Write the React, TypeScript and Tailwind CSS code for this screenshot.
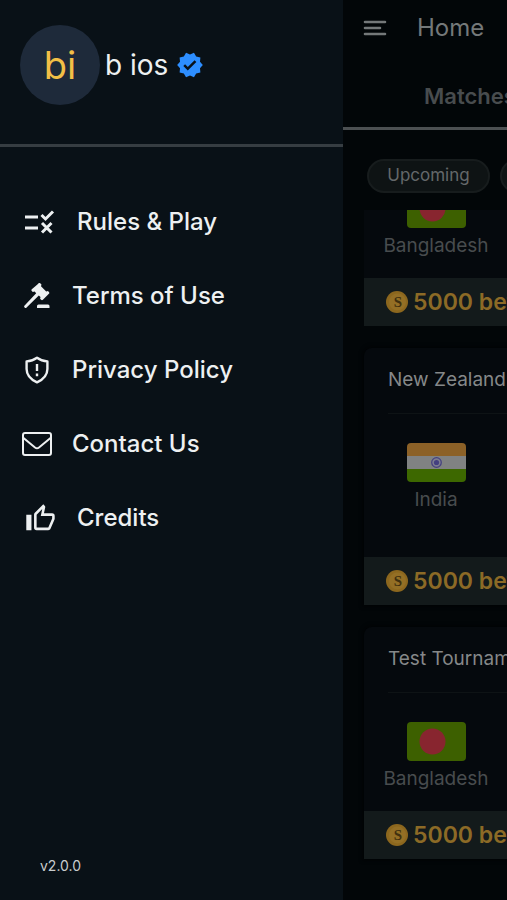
import React from "react";
import { MdVerified } from "react-icons/md";

function Rule() {
  return (
    <svg viewBox="0 0 30 24" className="h-6 w-[30px]" fill="none" stroke="currentColor" strokeWidth="3" aria-hidden="true">
      <path d="M0 7h13M0 18h13" />
      <path d="m16.500 5 4 4L28 1.500M17 13l9.500 9.500M26.500 13 17 22.500" />
    </svg>
  );
}

function Gavel() {
  return (
    <svg viewBox="0 0 26 26" className="size-[26px]" fill="currentColor" aria-hidden="true">
      <path d="M13.400 1.400 14.600.3a1.200 1.200 0 0 1 1.600 0l1.300 1.200-.5 1.700 5.200 5.200 1.700-.4 1 1a1.300 1.300 0 0 1 0 1.800l-6 6a1.300 1.300 0 0 1-1.800 0l-1-1 .4-1.700-1.700-1.700L2.600 24.600a1.400 1.400 0 0 1-2-2L12.200 10.200l-1.600-1.600-1.800.4-1-1a1.300 1.300 0 0 1 0-1.800z" />
      <path d="M14.500 21.500H24a1.500 1.500 0 0 1 1.500 1.500v2H13v-2a1.500 1.500 0 0 1 1.500-1.500z" />
    </svg>
  );
}

function Shield() {
  return (
    <svg viewBox="0 0 26 28" className="h-7 w-[26px]" fill="none" stroke="currentColor" strokeWidth="2.400" strokeLinejoin="round" aria-hidden="true">
      <path d="M13 1.800 C10 4 6 5.200 2.600 5.400V13c0 6.500 4.400 10.600 10.400 13.400C19 23.600 23.400 19.500 23.400 13V5.400C20 5.200 16 4 13 1.800z" />
      <path d="M13 8v7M13 17.500v2.700" />
    </svg>
  );
}

function Envelope() {
  return (
    <svg viewBox="0 0 30 24" className="h-6 w-[30px]" fill="none" stroke="currentColor" strokeWidth="2" aria-hidden="true">
      <rect x="1" y="1" width="28" height="22" rx="2" />
      <path d="m1.500 6 11.500 9.500q2 1.500 4 0L28.500 6" />
    </svg>
  );
}

function ThumbUp() {
  return (
    <svg viewBox="0 0 24 24" className="size-[31px]" fill="currentColor" aria-hidden="true">
      <path d="M5 9v12H1V9h4m4 12a2 2 0 0 1-2-2V9c0-.55.22-1.05.59-1.41L14.170 1l1.060 1.060c.27.27.44.64.44 1.050l-.03.32L14.690 8H21a2 2 0 0 1 2 2v2c0 .26-.05.5-.14.73l-3.020 7.050C19.540 20.500 18.830 21 18 21H9m0-2h9.030L21 12v-2h-8.790l1.130-5.320L9 9.030V19z" />
    </svg>
  );
}

function Item({ icon, wide, children }: { icon: React.ReactNode; wide?: boolean; children: React.ReactNode }) {
  return (
    <li className="h-[74px]">
      <a href="#" className="flex h-full items-center">
        <span className={wide ? "flex w-[55px] pl-[3px]" : "flex w-[50px] pr-5 justify-center"}>{icon}</span>
        <span>{children}</span>
      </a>
    </li>
  );
}

function Flag({ country }: { country: string }) {
  return (
    <svg viewBox="0 0 59 39" className="h-[39px] w-[59px] rounded" role="img" aria-label={country}>
      {country === "India" ? (
        <>
          <path fill="#8c6127" d="M0 0h59v13H0z" />
          <path fill="#808282" d="M0 13h59v13H0z" />
          <path fill="#3d6800" d="M0 26h59v13H0z" />
          <circle cx="29.500" cy="19.500" r="4.800" fill="#7c7c90" stroke="#444080" strokeWidth="1.200" />
          <circle cx="29.500" cy="19.500" r="2.600" fill="#444080" />
        </>
      ) : (
        <>
          <path fill="#3d6000" d="M0 0h59v39H0z" />
          <circle cx="25.500" cy="19.500" r="13" fill="#88252f" />
        </>
      )}
    </svg>
  );
}

function Bet() {
  return (
    <div className="flex h-12 items-center gap-[5px] bg-[#131a1b] pl-[22px] text-[23px] font-semibold text-[#8c6a26]">
      <svg viewBox="0 0 22 22" className="size-[22px] shrink-0" aria-hidden="true">
        <circle cx="11" cy="11" r="11" fill="#8c671e" />
        <circle cx="11.500" cy="11" r="8.500" fill="#946f25" />
        <text x="12" y="16" textAnchor="middle" fontSize="15" fontWeight="700" fill="#40300f" className="font-['Liberation_Serif',serif]">S</text>
      </svg>
      <span>5000 bet</span>
    </div>
  );
}

function Match({ title, country, short }: { title: string; country: string; short?: boolean }) {
  return (
    <article className="shrink-0 overflow-hidden rounded-t-lg bg-[#05090d] shadow-[0_0_4px_1px_#010304]">
      <div className="px-6">
        <h2 className="flex h-[66px] items-center border-b border-[#0e1315] text-[19px] text-[#858889]">{title}</h2>
      </div>
      <div className={short ? "h-[118px] pt-[29px]" : "h-[143px] pt-[29px]"}>
        <div className="flex w-36 flex-col items-center gap-1 text-[19px] leading-7 text-[#484c4e]">
          <Flag country={country} />
          {country}
        </div>
      </div>
      <Bet />
    </article>
  );
}

export default function App() {
  return (
    <div className="flex h-screen overflow-hidden whitespace-nowrap bg-[#020608] font-['Inter',sans-serif]">
      <aside className="flex w-[343px] shrink-0 flex-col bg-[#091117] text-[#edf0f1]">
        <header className="flex h-[147px] shrink-0 items-start border-b-[3px] border-[#363d42] px-5 pt-[25px]">
          <div className="flex h-20 items-center">
            <div className="flex size-20 items-center justify-center rounded-full bg-[#1e2a3a] text-[38px] text-[#f2bf46]">bi</div>
            <span className="ml-[5px] text-[28px]">b ios</span>
            <MdVerified className="ml-2 size-7 text-[#2d8eff]" aria-label="Verified" />
          </div>
        </header>
        <nav className="pt-[38px] pl-[22px] text-[24px] font-medium">
          <ul>
            <Item wide icon={<Rule />}>Rules &amp; Play</Item>
            <Item icon={<Gavel />}>Terms of Use</Item>
            <Item icon={<Shield />}>Privacy Policy</Item>
            <Item icon={<Envelope />}>Contact Us</Item>
            <Item wide icon={<ThumbUp />}>Credits</Item>
          </ul>
        </nav>
        <footer className="mt-auto pb-6 pl-10 text-[14px] leading-5 text-[#c8cccd]">v2.0.0</footer>
      </aside>
      <main className="flex w-screen shrink-0 flex-col">
        <header className="flex h-14 shrink-0 items-center gap-[30px] pl-5 text-[#747879]">
          <button type="button" aria-label="Open menu">
            <svg viewBox="0 0 24 16" className="h-4 w-6" fill="none" stroke="currentColor" strokeWidth="2.600" strokeLinecap="round">
              <path d="M2 2h20M2 8h15M2 14h20" />
            </svg>
          </button>
          <h1 className="text-[24px]">Home</h1>
        </header>
        <div className="flex h-[74px] shrink-0 border-b-[3px] border-[#4c5052] pl-[81px]">
          <button type="button" className="h-20 text-[22px] font-semibold text-[#484c4e]">Matches</button>
        </div>
        <div className="flex h-20 shrink-0 gap-2.5 pt-[29px] pl-6 text-[17px] text-[#64686a]">
          <button type="button" className="h-[34px] w-[123px] shrink-0 rounded-full border-2 border-[#171c1d] bg-[#0e1314]">Upcoming</button>
          <button type="button" className="h-[34px] w-[123px] shrink-0 rounded-full border-2 border-[#171c1d] bg-[#0e1314]" aria-label="Live" />
        </div>
        <div className="flex min-h-0 grow flex-col gap-[22px] overflow-hidden px-[21px]">
          <div className="flex h-[116px] shrink-0 flex-col justify-end overflow-hidden">
            <Match title="Asia Cup" country="Bangladesh" short />
          </div>
          <Match title="New Zealand tour" country="India" />
          <Match title="Test Tournament" country="Bangladesh" short />
        </div>
      </main>
    </div>
  );
}
